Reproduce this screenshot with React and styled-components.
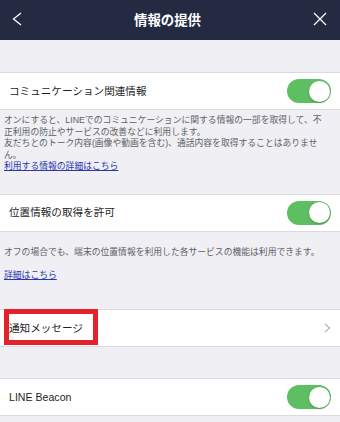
import React from 'react'
import styled, { createGlobalStyle } from 'styled-components'

const GlobalStyle = createGlobalStyle`
  html, body {
    margin: 0;
    padding: 0;
    background: #efeff4;
  }
  body {
    font-family: "Liberation Sans", "Noto Sans CJK JP", sans-serif;
    -webkit-font-smoothing: antialiased;
  }
`

function Toggle({ on }) {
  return (
    <ToggleTrack $on={on}>
      <ToggleKnob $on={on} />
    </ToggleTrack>
  )
}

export default function App() {
  return (
    <>
      <GlobalStyle />
      <Page>
        <Header>
          <svg width="10" height="14" viewBox="0 0 10 14" aria-label="戻る">
            <path d="M9 1 L1.5 7 L9 13" fill="none" stroke="#fff" strokeWidth="1.3" />
          </svg>
          <Title>情報の提供</Title>
          <svg width="14" height="14" viewBox="0 0 14 14" aria-label="閉じる">
            <path d="M1 1 L13 13 M13 1 L1 13" fill="none" stroke="#fff" strokeWidth="1.3" />
          </svg>
        </Header>

        <Spacer $h={32} />

        <Row>
          <Label>コミュニケーション関連情報</Label>
          <Toggle on />
        </Row>
        <Note $top={5} $bottom={21}>
          オンにすると、LINEでのコミュニケーションに関する情報の一部を取得して、不正利用の防止やサービスの改善などに利用します。
          <br />
          友だちとのトーク内容(画像や動画を含む)、通話内容を取得することはありません。
          <br />
          <NoteLink href="#">利用する情報の詳細はこちら</NoteLink>
        </Note>

        <Row>
          <Label>位置情報の取得を許可</Label>
          <Toggle on />
        </Row>
        <Note $top={15} $bottom={28}>
          オフの場合でも、端末の位置情報を利用した各サービスの機能は利用できます。
          <br />
          <br />
          <NoteLink href="#">詳細はこちら</NoteLink>
        </Note>

        <Row>
          <Label>通知メッセージ</Label>
          <svg width="7" height="10" viewBox="0 0 7 10">
            <path d="M1 1 L5.5 5 L1 9" fill="none" stroke="#b4b4b8" strokeWidth="1.2" />
          </svg>
          <Highlight />
        </Row>

        <Spacer $h={31} />

        <Row>
          <Label>LINE Beacon</Label>
          <Toggle on />
        </Row>
      </Page>
    </>
  )
}

const Page = styled.main`
  width: 340px;
  min-height: 422px;
  background: #efeff4;
  display: flex;
  flex-direction: column;
`

const Header = styled.header`
  height: 40px;
  background: #232a42;
  display: flex;
  align-items: center;
  justify-content: space-between;
  padding: 0 13px 2px 12px;
  box-sizing: border-box;
`

const Title = styled.h1`
  margin: 0;
  color: #ffffff;
  font-size: 13.4px;
  font-weight: bold;
  letter-spacing: 0;
`

const Spacer = styled.div`
  height: ${(p) => p.$h}px;
`

const Row = styled.div`
  position: relative;
  height: 38px;
  box-sizing: border-box;
  background: #ffffff;
  border-top: 1px solid #d9d9de;
  border-bottom: 1px solid #d9d9de;
  display: flex;
  align-items: center;
  justify-content: space-between;
  padding: 0 9px 0 9px;
`

const Label = styled.span`
  font-size: 10.6px;
  color: #1e1e1e;
  line-height: 1;
`

const ToggleTrack = styled.div`
  width: 44px;
  height: 24px;
  border-radius: 12px;
  background: ${(p) => (p.$on ? '#5ebe62' : '#e5e5ea')};
  display: flex;
  align-items: center;
  justify-content: ${(p) => (p.$on ? 'flex-end' : 'flex-start')};
  padding: 0 1.5px;
  box-sizing: border-box;
`

const ToggleKnob = styled.div`
  width: 21px;
  height: 21px;
  border-radius: 50%;
  background: #ffffff;
  box-shadow: 0 1px 2px rgba(0, 0, 0, 0.25);
`

const Note = styled.p`
  margin: 0;
  padding: ${(p) => p.$top}px 10px ${(p) => p.$bottom}px 4px;
  font-size: 8.8px;
  line-height: 11.5px;
  color: #626266;
`

const NoteLink = styled.a`
  color: #2a36b0;
  text-decoration: underline;
`

const Highlight = styled.div`
  position: absolute;
  left: 4px;
  top: -1px;
  width: 94px;
  height: 36px;
  box-sizing: border-box;
  border: 5px solid #e5212b;
  pointer-events: none;
`
